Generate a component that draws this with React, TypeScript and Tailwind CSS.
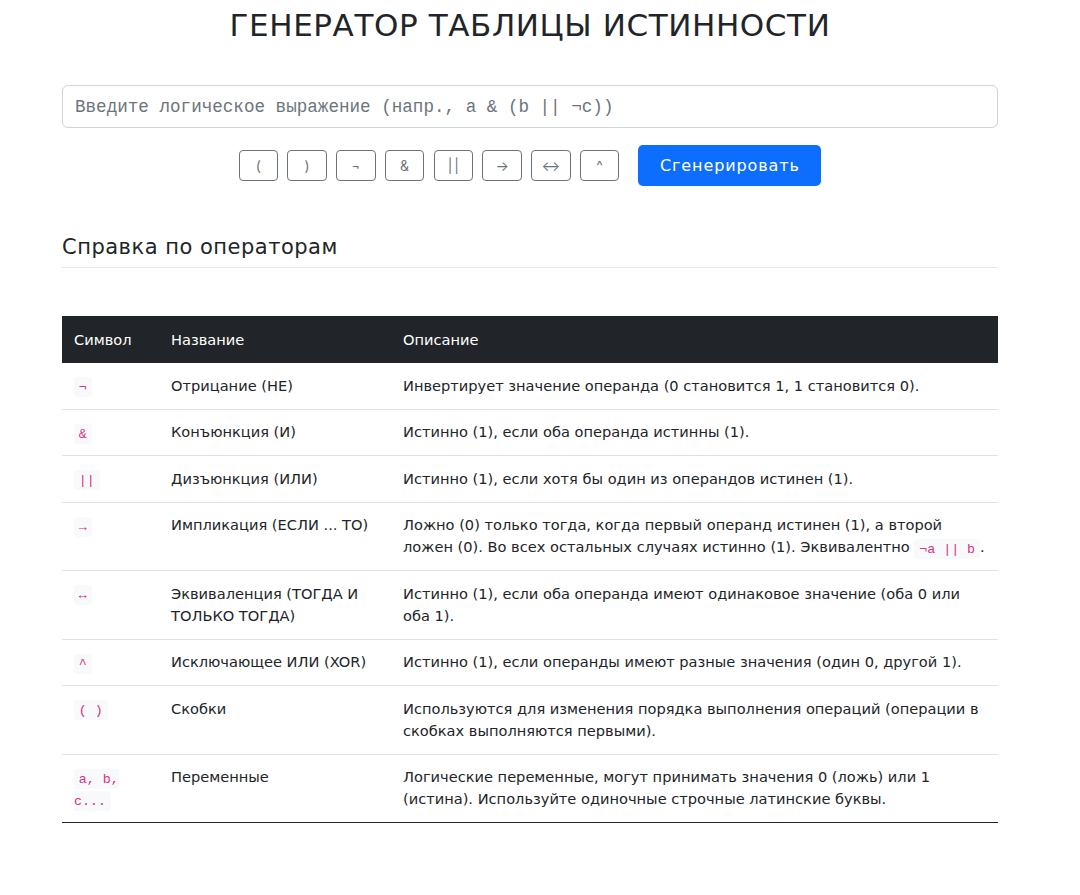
import React from "react";

const SANS = "font-['DejaVu_Sans',sans-serif]";
const MONO = "font-['Liberation_Mono',monospace]";

function Code({ children }: { children: React.ReactNode }) {
  return (
    <code className={`${MONO} text-[13.3px] leading-none tracking-normal text-[#d63384] bg-[#f8f9fa] rounded-[4px] px-[4.8px] py-[2.5px]`}>
      {children}
    </code>
  );
}

type Row = { sym: string; name: string; desc: React.ReactNode };

const rows: Row[] = [
  { sym: "¬", name: "Отрицание (НЕ)", desc: "Инвертирует значение операнда (0 становится 1, 1 становится 0)." },
  { sym: "&", name: "Конъюнкция (И)", desc: "Истинно (1), если оба операнда истинны (1)." },
  { sym: "||", name: "Дизъюнкция (ИЛИ)", desc: "Истинно (1), если хотя бы один из операндов истинен (1)." },
  {
    sym: "→",
    name: "Импликация (ЕСЛИ ... ТО)",
    desc: (
      <>
        Ложно (0) только тогда, когда первый операнд истинен (1), а второй ложен (0). Во всех остальных случаях истинно (1). Эквивалентно{" "}
        <span className="whitespace-nowrap">
          <Code>¬a || b</Code>.
        </span>
      </>
    ),
  },
  { sym: "↔", name: "Эквиваленция (ТОГДА И ТОЛЬКО ТОГДА)", desc: "Истинно (1), если оба операнда имеют одинаковое значение (оба 0 или оба 1)." },
  { sym: "^", name: "Исключающее ИЛИ (XOR)", desc: "Истинно (1), если операнды имеют разные значения (один 0, другой 1)." },
  { sym: "( )", name: "Скобки", desc: "Используются для изменения порядка выполнения операций (операции в скобках выполняются первыми)." },
  { sym: "a, b, c...", name: "Переменные", desc: "Логические переменные, могут принимать значения 0 (ложь) или 1 (истина). Используйте одиночные строчные латинские буквы." },
];

const ops = ["(", ")", "¬", "&", "||", "→", "↔", "^"];

export default function App() {
  return (
    <div className={`${SANS} bg-white text-[#212529] min-h-[895px]`}>
      <div className="ml-[62px] w-[936px] pt-[6px] pb-[40px]">
        <h1 className="text-center text-[31px] leading-[38px] tracking-[0.6px] font-normal text-[#212529]">
          ГЕНЕРАТОР ТАБЛИЦЫ ИСТИННОСТИ
        </h1>

        <input
          type="text"
          placeholder="Введите логическое выражение (напр., a & (b || ¬c))"
          className={`mt-[41px] block w-full h-[43px] border border-[#ced4da] rounded-[6px] px-[12px] ${MONO} text-[17.6px] placeholder:text-[#6c757d] outline-none`}
        />

        <div className="mt-[17px] flex items-center justify-center">
          <div className="flex gap-[9.25px]">
            {ops.map((o) => (
              <button
                key={o}
                className="w-[39.5px] h-[31px] border border-[#6c757d] rounded-[4px] text-[#6c757d] text-[14px] font-['Inter',sans-serif] tracking-[2px] flex items-center justify-center"
              >
                <span className="-mr-[2px]">{o}</span>
              </button>
            ))}
          </div>
          <button className="ml-[19px] w-[183px] h-[41px] bg-[#0d6efd] text-white rounded-[5px] text-[16px] tracking-[0.9px]">
            Сгенерировать
          </button>
        </div>

        <h2 className="mt-[48px] text-[21px] leading-[26px] tracking-[0.5px] pb-[7px] border-b border-[#e5e7eb] font-normal">
          Справка по операторам
        </h2>

        <table className="mt-[48px] w-full border-collapse text-[14.6px] leading-[22px]">
          <thead>
            <tr className="bg-[#212529] text-white">
              <th className="w-[97px] text-left font-normal px-[12px] py-[12.5px]">Символ</th>
              <th className="w-[232px] text-left font-normal px-[12px] py-[12.5px]">Название</th>
              <th className="text-left font-normal px-[12px] py-[12.5px]">Описание</th>
            </tr>
          </thead>
          <tbody>
            {rows.map((r, i) => (
              <tr
                key={i}
                className={i === rows.length - 1 ? "border-b border-[#212529]" : "border-b border-[#dee2e6]"}
              >
                <td className="align-top px-[12px] py-[11.75px]">
                  <Code>{r.sym}</Code>
                </td>
                <td className="align-top px-[12px] py-[11.75px]">{r.name}</td>
                <td className="align-top px-[12px] py-[11.75px]">{r.desc}</td>
              </tr>
            ))}
          </tbody>
        </table>
      </div>
    </div>
  );
}
